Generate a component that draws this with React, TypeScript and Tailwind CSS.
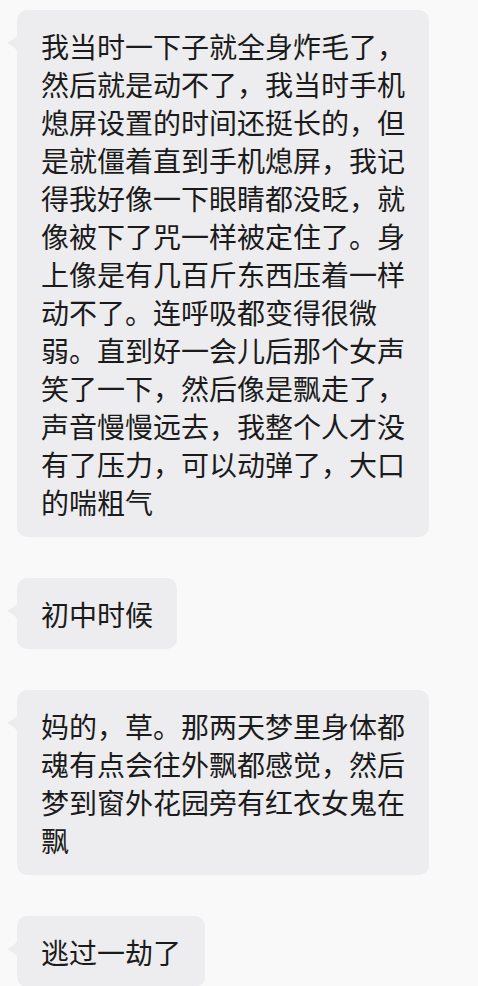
const messages = [
  "我当时一下子就全身炸毛了，然后就是动不了，我当时手机熄屏设置的时间还挺长的，但是就僵着直到手机熄屏，我记得我好像一下眼睛都没眨，就像被下了咒一样被定住了。身上像是有几百斤东西压着一样动不了。连呼吸都变得很微弱。直到好一会儿后那个女声笑了一下，然后像是飘走了，声音慢慢远去，我整个人才没有了压力，可以动弹了，大口的喘粗气",
  "初中时候",
  "妈的，草。那两天梦里身体都魂有点会往外飘都感觉，然后梦到窗外花园旁有红衣女鬼在飘",
  "逃过一劫了",
];

function Bubble({ text }: { text: string }) {
  return (
    <div className="relative ml-[17px] w-fit max-w-[412px] rounded-[10px] bg-[#ededef] px-6 py-[16.5px]">
      {/* tail */}
      <svg
        className="absolute left-[-10px] top-[21px]"
        width="11"
        height="24"
        viewBox="0 0 11 24"
      >
        <path d="M11 0 C11 6 6 9 1.5 10.8 Q0 12 1.5 13.2 C6 15 11 18 11 24 Z" fill="#ededef" />
      </svg>
      <p className="text-[28px] leading-[38px] text-[#1b1b1b] break-all">{text}</p>
    </div>
  );
}

export default function App() {
  return (
    <div
      className="min-h-screen w-[478px] overflow-hidden bg-[#f9f9f9] pt-[10px]"
      style={{ fontFamily: '"Noto Sans CJK SC", "Noto Sans", sans-serif' }}
    >
      <div className="flex flex-col gap-[41px]">
        {messages.map((m, i) => (
          <Bubble key={i} text={m} />
        ))}
      </div>
    </div>
  );
}
